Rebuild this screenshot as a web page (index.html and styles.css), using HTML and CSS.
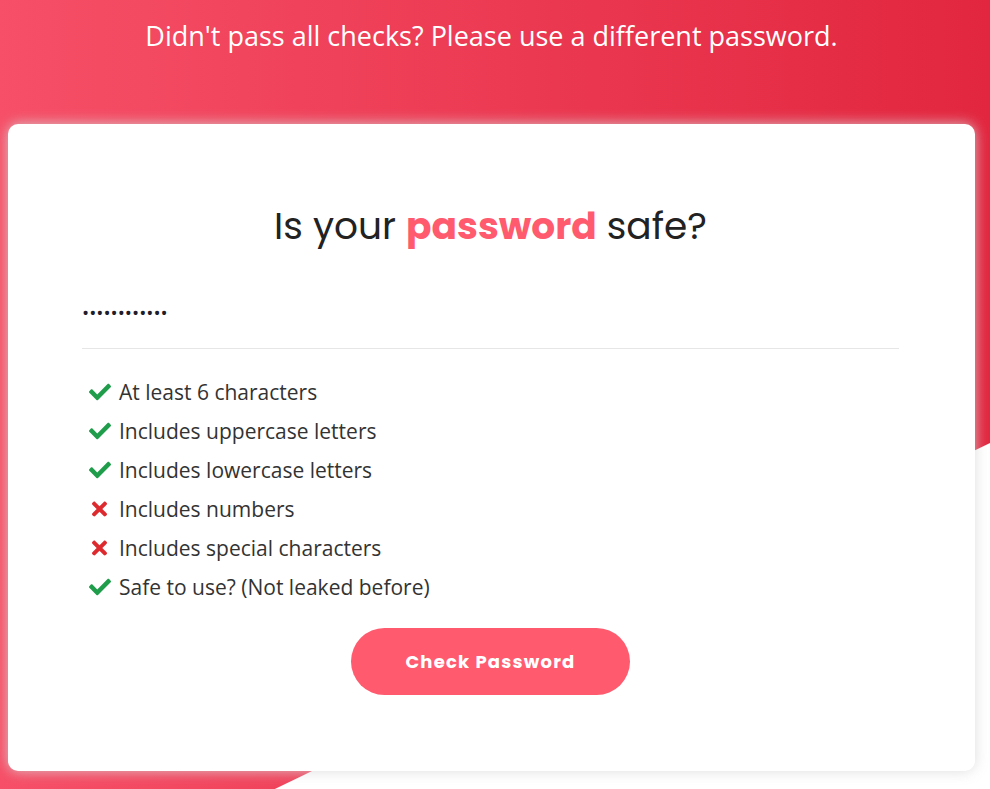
FILE: index.html
```html
<!DOCTYPE html>
<html lang="en">
<head>
    <meta charset="UTF-8">
    <meta name="viewport" content="width=device-width, initial-scale=1.0">
    <title>Password Checker</title>
    <link rel="stylesheet" href="styles.css">
</head>
<body>

    <div class="page">
        <header class="top">
            <h2>Didn't pass all checks? Please use a different password.</h2>
        </header>

        <div class="card">
            <h1>Is your <span class="accent">password</span> safe?</h1>

            <input type="password" class="pass-input" value="............">

            <ul class="checks">
                <li class="ok"><svg viewBox="0 0 512 512"><path d="M173.898 439.404l-166.4-166.4c-9.997-9.997-9.997-26.206 0-36.204l36.203-36.204c9.997-9.998 26.207-9.998 36.204 0L192 312.69 432.095 72.596c9.997-9.997 26.207-9.997 36.204 0l36.203 36.204c9.997 9.997 9.997 26.206 0 36.204l-294.4 294.401c-9.998 9.997-26.207 9.997-36.204-.001z"/></svg>At least 6 characters</li>
                <li class="ok"><svg viewBox="0 0 512 512"><path d="M173.898 439.404l-166.4-166.4c-9.997-9.997-9.997-26.206 0-36.204l36.203-36.204c9.997-9.998 26.207-9.998 36.204 0L192 312.69 432.095 72.596c9.997-9.997 26.207-9.997 36.204 0l36.203 36.204c9.997 9.997 9.997 26.206 0 36.204l-294.4 294.401c-9.998 9.997-26.207 9.997-36.204-.001z"/></svg>Includes uppercase letters</li>
                <li class="ok"><svg viewBox="0 0 512 512"><path d="M173.898 439.404l-166.4-166.4c-9.997-9.997-9.997-26.206 0-36.204l36.203-36.204c9.997-9.998 26.207-9.998 36.204 0L192 312.69 432.095 72.596c9.997-9.997 26.207-9.997 36.204 0l36.203 36.204c9.997 9.997 9.997 26.206 0 36.204l-294.4 294.401c-9.998 9.997-26.207 9.997-36.204-.001z"/></svg>Includes lowercase letters</li>
                <li class="bad"><svg viewBox="0 0 352 512"><path d="M242.72 256l100.07-100.07c12.28-12.28 12.28-32.19 0-44.48l-22.24-22.24c-12.28-12.28-32.19-12.28-44.48 0L176 189.28 75.93 89.21c-12.28-12.28-32.19-12.28-44.48 0L9.21 111.45c-12.28 12.28-12.28 32.19 0 44.48L109.28 256 9.21 356.07c-12.28 12.28-12.28 32.19 0 44.48l22.24 22.24c12.28 12.28 32.2 12.28 44.48 0L176 322.72l100.07 100.07c12.28 12.28 32.2 12.28 44.48 0l22.24-22.24c12.28-12.28 12.28-32.19 0-44.48L242.72 256z"/></svg>Includes numbers</li>
                <li class="bad"><svg viewBox="0 0 352 512"><path d="M242.72 256l100.07-100.07c12.28-12.28 12.28-32.19 0-44.48l-22.24-22.24c-12.28-12.28-32.19-12.28-44.48 0L176 189.28 75.93 89.21c-12.28-12.28-32.19-12.28-44.48 0L9.21 111.45c-12.28 12.28-12.28 32.19 0 44.48L109.28 256 9.21 356.07c-12.28 12.28-12.28 32.19 0 44.48l22.24 22.24c12.28 12.28 32.2 12.28 44.48 0L176 322.72l100.07 100.07c12.28 12.28 32.2 12.28 44.48 0l22.24-22.24c12.28-12.28 12.28-32.19 0-44.48L242.72 256z"/></svg>Includes special characters</li>
                <li class="ok"><svg viewBox="0 0 512 512"><path d="M173.898 439.404l-166.4-166.4c-9.997-9.997-9.997-26.206 0-36.204l36.203-36.204c9.997-9.998 26.207-9.998 36.204 0L192 312.69 432.095 72.596c9.997-9.997 26.207-9.997 36.204 0l36.203 36.204c9.997 9.997 9.997 26.206 0 36.204l-294.4 294.401c-9.998 9.997-26.207 9.997-36.204-.001z"/></svg>Safe to use? (Not leaked before)</li>
            </ul>

            <div class="actions">
                <button class="check-btn">Check Password</button>
            </div>
        </div>
    </div>

</body>
</html>
```

FILE: styles.css
```css
html, body {
    margin: 0;
    padding: 0;
}
body {
    font-family: "Open Sans", "Liberation Sans", sans-serif;
    background-color: #fff;
    overflow: hidden;
}
.page {
    position: relative;
    min-height: 789px;
    overflow: hidden;
    padding: 0 15px 0 8px;
}
/* red diagonal background */
.page::before {
    content: "";
    position: absolute;
    top: 0;
    left: 0;
    width: 100%;
    height: 922px;
    background: linear-gradient(to right, #f64f67, #e2263f);
    clip-path: polygon(0 0, 100% 0, 100% 443px, 0 922px);
    z-index: 0;
}
.top {
    position: relative;
    z-index: 1;
    height: 124px;
    text-align: center;
}
.top h2 {
    margin: 0;
    padding-top: 16px;
    font-size: 27px;
    font-weight: 400;
    line-height: 40px;
    color: #fff;
}
.card {
    position: relative;
    z-index: 1;
    background-color: #fff;
    border-radius: 10px;
    box-shadow: 0 0 14px rgba(215, 215, 215, 0.85);
    padding: 75px 76px 76px 74px;
}
.card h1 {
    margin: 0 0 39px;
    text-align: center;
    font-family: "Poppins", "Inter", sans-serif;
    font-size: 37.5px;
    font-weight: 400;
    line-height: 54px;
    color: #222;
}
.accent {
    color: #ff5a6e;
    font-weight: 700;
}
.pass-input {
    display: block;
    width: 100%;
    box-sizing: border-box;
    height: 57px;
    border: none;
    border-bottom: 1px solid #e6e6e6;
    outline: none;
    padding: 0 0 14px 0;
    font-family: "Open Sans", sans-serif;
    font-size: 19px;
    color: #1d1d2b;
    letter-spacing: 0;
}
.checks {
    list-style: none;
    margin: 23px 0 22px;
    padding: 0 0 0 7px;
}
.checks li {
    display: flex;
    align-items: center;
    height: 39px;
    font-size: 21px;
    color: #333;
}
.checks svg {
    height: 22px;
    flex: none;
}
.ok svg {
    width: 22px;
    margin-right: 8px;
    fill: #1f9d4b;
}
.bad svg {
    width: 15px;
    margin: 0 12px 0 3px;
    fill: #dd2a2e;
}
.actions {
    display: flex;
    justify-content: center;
}
.check-btn {
    width: 279px;
    height: 67px;
    border: none;
    border-radius: 34px;
    background-color: #ff5a6e;
    color: #fff;
    font-family: "Poppins", "Inter", sans-serif;
    font-size: 18px;
    font-weight: 700;
    letter-spacing: 1.2px;
    cursor: pointer;
}
```
